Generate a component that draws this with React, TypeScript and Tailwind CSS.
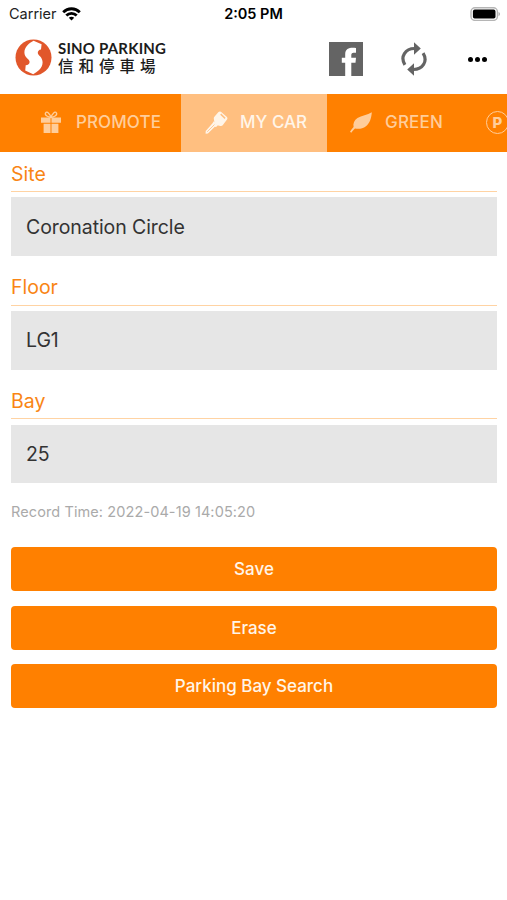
import type { ReactNode } from 'react';

function WifiIcon() {
  return (
    <svg className="ml-[5px] h-[14px] w-[19px]" viewBox="0 0 19 14" fill="none" stroke="#000" strokeWidth={2.8}>
      <path d="M1.2 5.2C5.8.6 13.2.6 17.8 5.2" />
      <path d="M4.3 8.5c2.9-2.9 7.5-2.9 10.4 0" />
      <path d="M9.5 13.4L6.8 10.7c1.5-1.4 3.9-1.4 5.4 0z" fill="#000" stroke="none" />
    </svg>
  );
}

function BatteryIcon() {
  return (
    <svg className="h-[14px] w-[31px]" viewBox="0 0 31 14">
      <rect x="1" y=".8" width="26.4" height="12.6" rx="4" fill="#fff" stroke="#b5b5b5" strokeWidth="1.4" />
      <rect x="2.9" y="2.6" width="22.6" height="9" rx="1.8" fill="#000" />
      <path d="M28.6 5v4.2c1.6-.6 1.6-3.6 0-4.2z" fill="#999" />
    </svg>
  );
}

function Logo() {
  return (
    <svg className="h-[37px] w-[37px] shrink-0" viewBox="0 0 37 37">
      <circle cx="18.5" cy="18.5" r="18" fill="#e1572b" />
      <path
        d="M18.6 1.8L26.6 5.2L26 10.4C24 10.6 22.6 12 22.8 14C23 16.6 27.6 17.8 27.6 23.3C27.6 29.5 22 33 18.2 35.2L10.2 31.6L10.7 26.2C13 26 14.7 24.8 14.600 22.700C14.400 19.800 9.400 18.600 9.400 13.400C9.400 8.400 14 4 18.600 1.800Z"
        fill="#fff"
      />
    </svg>
  );
}

function FacebookIcon() {
  return (
    <svg className="h-[34px] w-[34px]" viewBox="0 0 34 34">
      <path
        fill="#646464"
        d="M0 0h34v34H22.3V20.7h4.2l.5-5h-4.7v-2.5c0-1.6.5-2.5 2.3-2.5H27V6c-5-.7-10.800-.4-10.800 6.200v3.500h-3.400v5h3.400V34H0z"
      />
    </svg>
  );
}

function RefreshIcon() {
  return (
    <svg className="h-[34px] w-[26px]" viewBox="0 0 26 34">
      <path
        d="M3.9 22.8C-1.2 14.5 4.5 6.5 13.5 6.5M22.1 11.2c5.100 8.300-.6 16.300-9.600 16.300"
        fill="none"
        stroke="#646464"
        strokeWidth="3.200"
      />
      <path d="M13 .3l6.800 6.200-6.800 6.200zM13 21.300l-6.800 6.200 6.800 6.200z" fill="#646464" />
    </svg>
  );
}

function GiftIcon() {
  return (
    <svg className="h-[22px] w-[20px]" viewBox="0 0 20 22">
      <path fill="currentColor" d="M0 6.5h9.500v5.300H0zM10.500 6.500H20v5.300h-9.500zM2.600 12.800h6.900V22H2.600zM10.500 12.800h6.900V22h-6.900z" />
      <path
        d="M10 6.500C7.500 6 3.300 4.500 4.500 2 6-.5 9.300 3.500 10 6.500zm0 0C12.500 6 16.700 4.500 15.500 2 14-.5 10.700 3.500 10 6.500z"
        fill="none"
        stroke="currentColor"
        strokeWidth="1.3"
      />
    </svg>
  );
}

function KeyIcon() {
  return (
    <svg className="h-[23px] w-[23px]" viewBox="0 0 23 23">
      <path
        fill="currentColor"
        fillRule="evenodd"
        d="M13.5 1q1.200-1 2.400-.2l6 5.200q1 1 .3 2.300l-4.500 6q-1 1.100-2.300.7l-3.200-.7-2.800-3-.6-3.500q-.2-1.300.8-2.300zM16.200 2.600l-1 1.100 4.400 4.200 1-1.200z"
      />
      <path fill="currentColor" d="M8.800 10.200l4 4-1.700 1.800-1.300-.2-6.900 6.700-2.300.2.100-2.700 6.600-7.400z" />
      <path d="M2.200 20.800l7.300-7.300" stroke="#ffbf80" strokeWidth=".8" />
    </svg>
  );
}

function LeafIcon() {
  return (
    <svg className="h-[21px] w-[22px]" viewBox="0 0 22 21">
      <path
        fill="currentColor"
        d="M21.800.2c-.3 5.500-2 11-5.800 14-3.600 2.700-7.700 2.900-11 2.200-1.500 1.300-2.400 2.500-3.700 4.300L0 19.800c1-1.800 2.200-3.200 3.600-4.700C2.800 11.500 4.300 8.200 7.500 6 11.500 3.300 17.500 3 21.800.2z"
      />
    </svg>
  );
}

function ParkingIcon() {
  return (
    <span className="flex h-[23px] w-[23px] shrink-0 items-center justify-center rounded-full border border-current text-[15px] leading-none font-extrabold">
      P
    </span>
  );
}

interface TabProps {
  icon: ReactNode;
  label?: string;
  active?: boolean;
  className: string;
}

function Tab({ icon, label, active = false, className }: TabProps) {
  return (
    <button
      type="button"
      className={`flex shrink-0 items-center gap-[12px] pb-[2px] text-[17px] font-medium ${active ? 'bg-[#ffbf80] text-[#fff5e9]' : 'text-[#ffcd9a]'} ${className}`}
    >
      <span className="flex w-[23px] shrink-0 items-center">{icon}</span>
      {label && <span className="pt-[2px] whitespace-nowrap">{label}</span>}
    </button>
  );
}

function Field({ label, value }: { label: string; value: string }) {
  return (
    <div className="h-[113.700px]">
      <div className="h-[40px] border-b border-[#ffd3a3] pt-[7.500px] text-[19.500px] leading-[28px] text-[#f98514]">{label}</div>
      <div className="mt-[5.400px] flex h-[58.700px] items-center bg-[#e6e6e6] px-[15px] pt-px text-[19.500px] tracking-[-0.080px] text-[#333]">{value}</div>
    </div>
  );
}

const actions = ['Save', 'Erase', 'Parking Bay Search'];

export default function App() {
  return (
    <div className="h-[900px] w-full overflow-hidden bg-white font-['Inter',sans-serif]">
      <div className="grid h-[28px] grid-cols-3 items-center pr-[6px] pl-[9px] text-[14.500px] text-[#222]">
        <div className="flex items-center">
          Carrier
          <WifiIcon />
        </div>
        <div className="pr-[3px] text-center font-semibold text-black">2:05 PM</div>
        <div className="flex justify-end">
          <BatteryIcon />
        </div>
      </div>

      <header className="flex h-[66px] items-center pb-[4px] pl-[15px]">
        <div className="flex items-center pb-[3px]">
          <Logo />
          <div className="ml-[6px] w-[119px] pb-[4px] text-[#1c1c1c]">
            <div className="font-['Lato',sans-serif] text-[15px] leading-[18px] font-bold tracking-[0.2px] whitespace-nowrap">SINO PARKING</div>
            <div className="font-['Noto_Sans_CJK_TC',sans-serif] text-[15.500px] leading-[16px] font-medium tracking-[5px] whitespace-nowrap">信和停車場</div>
          </div>
        </div>
        <div className="flex flex-1 items-center pl-[152px]">
          <FacebookIcon />
          <span className="ml-[38px]">
            <RefreshIcon />
          </span>
          <span className="ml-[41px] flex gap-[2px]">
            <i className="size-[5px] rounded-full bg-black" />
            <i className="size-[5px] rounded-full bg-black" />
            <i className="size-[5px] rounded-full bg-black" />
          </span>
        </div>
      </header>

      <nav className="flex h-[58px] overflow-hidden bg-[#ff8000]">
        <Tab icon={<GiftIcon />} label="PROMOTE" className="w-[181px] pl-[41px] tracking-[0.100px]" />
        <Tab icon={<KeyIcon />} label="MY CAR" active className="w-[146px] pl-[24px]" />
        <Tab icon={<LeafIcon />} label="GREEN" className="w-[136px] pl-[23px] tracking-[0.200px]" />
        <Tab icon={<ParkingIcon />} className="w-[146px] pl-[23px]" />
      </nav>

      <main className="pr-[10px] pl-[11px]">
        <Field label="Site" value="Coronation Circle" />
        <Field label="Floor" value="LG1" />
        <Field label="Bay" value="25" />

        <p className="pt-[7px] text-[14.500px] leading-[24px] tracking-[0.100px] text-[#aaa]">Record Time: 2022-04-19 14:05:20</p>

        <div className="mt-[23px] flex flex-col gap-[14.700px]">
          {actions.map(action => (
            <button key={action} type="button" className="h-[44px] rounded-[4px] bg-[#ff8000] pt-px text-[17px] font-medium text-[#fff5e9]">
              {action}
            </button>
          ))}
        </div>
      </main>
    </div>
  );
}
